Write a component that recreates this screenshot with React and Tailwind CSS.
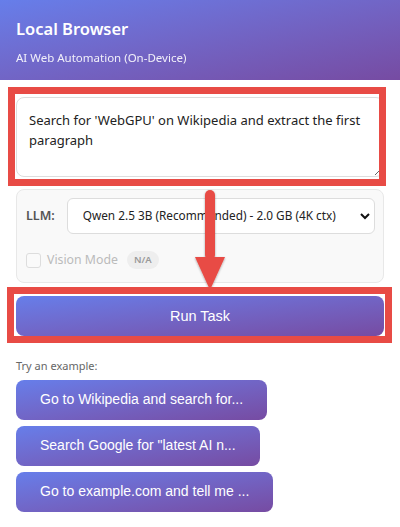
import { useState } from "react";

const EXAMPLES = [
  "Go to Wikipedia and search for...",
  'Search Google for "latest AI n...',
  "Go to example.com and tell me ...",
];

function Arrow() {
  return (
    <svg
      className="pointer-events-none absolute left-[190px] top-[186px]"
      width="42"
      height="110"
      viewBox="0 0 42 110"
    >
      <defs>
        <filter id="sh" x="-50%" y="-50%" width="200%" height="200%">
          <feDropShadow dx="0" dy="1" stdDeviation="1" floodColor="#000" floodOpacity="0.35" />
        </filter>
      </defs>
      <g filter="url(#sh)" fill="#e84b45">
        <rect x="15" y="4" width="10" height="70" rx="5" />
        <path d="M5 71 L35 71 L20 104 Z" />
      </g>
    </svg>
  );
}

export default function App() {
  const [task, setTask] = useState("Search for 'WebGPU' on Wikipedia and extract the first paragraph");

  return (
    <div className="relative min-h-[527px] w-[400px] bg-white font-['Noto_Sans','Open_Sans',sans-serif] text-[#333]">
      <header className="h-[80px] bg-gradient-to-br from-[#667eea] to-[#764ba2] px-4 pt-[17px] text-white">
        <h1 className="text-[16.5px] font-semibold leading-6">Local Browser</h1>
        <p className="mt-[9px] text-[11.5px] leading-4 opacity-90">AI Web Automation (On-Device)</p>
      </header>

      <main className="px-4 pt-[17px]">
        <textarea
          value={task}
          onChange={(e) => setTask(e.target.value)}
          className="block h-[80px] w-full resize-y rounded-lg border border-[#ddd] px-3 pb-[10px] pt-[12px] text-[13px] leading-5 text-[#222] outline-none"
        />

        <div className="mt-3 rounded-lg border border-[#e8e8e8] bg-[#f9f9f9] px-2 pb-[13px] pt-2">
          <div className="flex items-center gap-3">
            <label className="pl-[1px] text-[12.5px] font-semibold text-[#555]">LLM:</label>
            <div className="relative flex-1">
              <select
                defaultValue="qwen3b"
                className="block h-[36px] w-full appearance-none rounded-md border border-[#ddd] bg-white pl-[15px] pr-6 text-[11.8px] text-[#222] outline-none"
              >
                <option value="qwen3b">Qwen 2.5 3B (Recommended) - 2.0 GB (4K ctx)</option>
              </select>
              <svg
                className="pointer-events-none absolute right-[5px] top-[14px]"
                width="10"
                height="8"
                viewBox="0 0 10 8"
              >
                <path d="M1 2 L5 6 L9 2" fill="none" stroke="#111" strokeWidth="2" />
              </svg>
            </div>
          </div>
          <div className="mt-[17px] flex items-center gap-[6px] pl-[1px]">
            <span className="h-[15px] w-[15px] rounded-[3px] border border-[#ddd] bg-[#fafafa]" />
            <span className="text-[12.3px] text-[#bbb]">Vision Mode</span>
            <span className="ml-[3px] rounded-full bg-[#eee] px-[7px] py-[2px] text-[9.5px] font-semibold text-[#999]">N/A</span>
          </div>
        </div>

        <button className="mt-[13px] block h-[40px] w-full rounded-lg bg-gradient-to-br from-[#667eea] to-[#764ba2] font-['Liberation_Sans',Arial,sans-serif] text-[14.5px] text-white">
          Run Task
        </button>

        <p className="mt-[22px] text-[11px] text-[#666]">Try an example:</p>
        <div className="mt-[5px] flex flex-col items-start gap-[6px]">
          {EXAMPLES.map((ex) => (
            <button
              key={ex}
              className="h-[40px] rounded-lg bg-gradient-to-br from-[#667eea] to-[#764ba2] px-6 font-['Liberation_Sans',Arial,sans-serif] text-[14px] text-white"
            >
              {ex}
            </button>
          ))}
        </div>
      </main>

      {/* annotation overlays */}
      <div className="pointer-events-none absolute left-[8px] top-[87px] h-[99px] w-[378px] border-[7px] border-[#e84b45]" />
      <Arrow />
      <div className="pointer-events-none absolute left-[7px] top-[287px] h-[56px] w-[385px] border-[7px] border-[#e84b45]" />
    </div>
  );
}
